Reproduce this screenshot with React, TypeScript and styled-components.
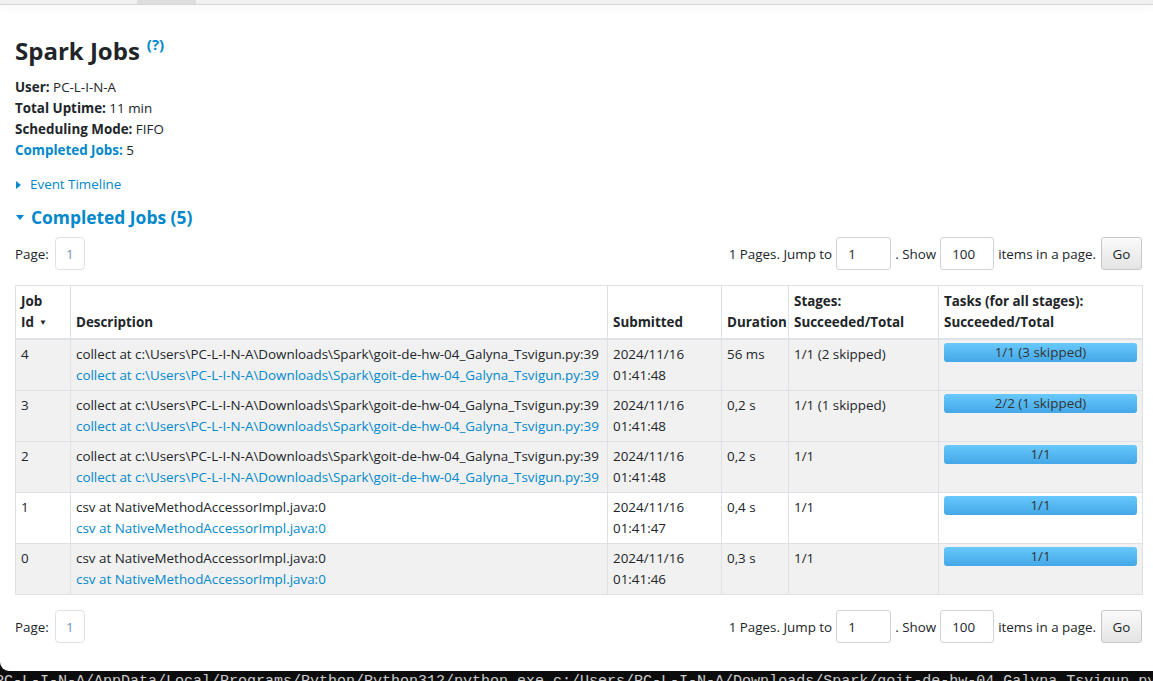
import React from "react";
import styled, { createGlobalStyle } from "styled-components";

const GlobalStyle = createGlobalStyle`
  html, body {
    margin: 0;
    padding: 0;
    background: #0c0c0c;
    overflow: hidden;
  }
  body {
    font-family: "Open Sans", "Noto Sans", sans-serif;
    font-size: 13.4px;
    color: #212529;
  }
`;

const LINK = "#0088cc";
const BORDER = "#dee2e6";

const Window = styled.div`
  background: #fff;
  height: 671px;
  border-bottom-left-radius: 9px;
  overflow: hidden;
  display: flex;
  flex-direction: column;
`;

const NavStrip = styled.div`
  height: 4px;
  background: #f0f0f0;
  border-bottom: 1px solid #d6d6d6;
  box-shadow: 0 2px 10px rgba(0, 0, 0, 0.06);
  display: flex;
`;

const NavTab = styled.div`
  margin-left: 137px;
  width: 59px;
  background: #dcdcdc;
`;

const Content = styled.div`
  padding: 0 11px 0 15px;
`;

const Title = styled.h3`
  margin: 31px 0 11px 0;
  font-size: 24px;
  line-height: 30px;
  font-weight: 700;
  color: #212529;
  display: flex;
  align-items: flex-start;
  gap: 7px;
`;

const Help = styled.sup`
  font-size: 15px;
  line-height: 16px;
  color: ${LINK};
  font-weight: 700;
  margin-top: 0;
`;

const InfoList = styled.ul`
  list-style: none;
  margin: 0;
  padding: 0;
  line-height: 21px;
`;

const InfoLabel = styled.strong<{ $link?: boolean }>`
  font-weight: 700;
  color: ${(p) => (p.$link ? LINK : "inherit")};
`;

const Toggle = styled.div<{ $big?: boolean }>`
  display: flex;
  align-items: center;
  gap: ${(p) => (p.$big ? "7px" : "8px")};
  color: ${LINK};
  font-size: ${(p) => (p.$big ? "17.4px" : "13.4px")};
  font-weight: ${(p) => (p.$big ? 700 : 400)};
  line-height: ${(p) => (p.$big ? "26px" : "21px")};
  margin-top: ${(p) => (p.$big ? "9px" : "13px")};
  padding-left: 1px;
`;

const Arrow = styled.span<{ $open?: boolean }>`
  width: 0;
  height: 0;
  ${(p) =>
    p.$open
      ? `border-left: 4px solid transparent; border-right: 4px solid transparent; border-top: 5px solid ${LINK};`
      : `border-top: 4px solid transparent; border-bottom: 4px solid transparent; border-left: 5px solid ${LINK}; margin-right: 1px;`}
`;

const Pager = styled.div<{ $top?: boolean }>`
  display: flex;
  align-items: center;
  justify-content: space-between;
  height: 33px;
  margin-top: ${(p) => (p.$top ? "7px" : "0")};
`;

const PagerSide = styled.div`
  display: flex;
  align-items: center;
  gap: 4px;
`;

const PageBox = styled.span`
  display: inline-flex;
  align-items: center;
  justify-content: center;
  width: 30px;
  height: 33px;
  box-sizing: border-box;
  border: 1px solid ${BORDER};
  border-radius: 4px;
  color: #6f94bb;
  margin-left: 2px;
`;

const NumInput = styled.input<{ $w: number }>`
  box-sizing: border-box;
  width: ${(p) => p.$w}px;
  height: 33px;
  border: 1px solid #ced4da;
  border-radius: 3px;
  padding: 0 11px;
  font: inherit;
  color: #212529;
  outline: none;
`;

const GoButton = styled.button`
  box-sizing: border-box;
  width: 41px;
  height: 33px;
  margin-left: 1px;
  border: 1px solid #c8c8c8;
  border-radius: 3px;
  background: linear-gradient(to bottom, #fafafa, #e4e4e4);
  font: inherit;
  color: #212529;
`;

const Table = styled.table`
  width: 1127px;
  border-collapse: collapse;
  margin: 15px 0;
  line-height: 21px;
  table-layout: fixed;
`;

const Th = styled.th<{ $w: number }>`
  box-sizing: border-box;
  width: ${(p) => p.$w}px;
  text-align: left;
  vertical-align: bottom;
  font-weight: 700;
  padding: 5px 5px 5px 5px;
  border: 1px solid ${BORDER};
  border-bottom: 2px solid ${BORDER};
`;

const SortLine = styled.span`
  display: block;
  white-space: nowrap;
`;

const SortMark = styled.span`
  display: inline-block;
  font-size: 8px;
  line-height: 8px;
  margin-left: 5px;
  vertical-align: 2px;
`;

const Row = styled.tr<{ $striped: boolean }>`
  background: ${(p) => (p.$striped ? "#f1f1f1" : "#fff")};
`;

const Td = styled.td`
  vertical-align: top;
  padding: 4px 5px;
  border: 1px solid ${BORDER};
  white-space: nowrap;
  overflow: hidden;
`;

const DescLink = styled.div`
  color: ${LINK};
`;

const Bar = styled.div`
  height: 19px;
  margin-top: -1px;
  border-radius: 3px;
  background: linear-gradient(to bottom, #68c9fc, #44a7e7);
  text-align: center;
  line-height: 19px;
  color: #333;
`;

const Terminal = styled.div`
  height: 10px;
  overflow: hidden;
  font-family: "Liberation Mono", "DejaVu Sans Mono", monospace;
  font-size: 15px;
  line-height: 16px;
  color: #cccccc;
  white-space: nowrap;
  margin-left: -5px;
  padding-top: 3px;
`;

type Job = {
  id: number;
  desc: string;
  submitted: [string, string];
  duration: string;
  stages: string;
  tasks: string;
};

const COLLECT =
  "collect at c:\\Users\\PC-L-I-N-A\\Downloads\\Spark\\goit-de-hw-04_Galyna_Tsvigun.py:39";
const CSV = "csv at NativeMethodAccessorImpl.java:0";

const jobs: Job[] = [
  { id: 4, desc: COLLECT, submitted: ["2024/11/16", "01:41:48"], duration: "56 ms", stages: "1/1 (2 skipped)", tasks: "1/1 (3 skipped)" },
  { id: 3, desc: COLLECT, submitted: ["2024/11/16", "01:41:48"], duration: "0,2 s", stages: "1/1 (1 skipped)", tasks: "2/2 (1 skipped)" },
  { id: 2, desc: COLLECT, submitted: ["2024/11/16", "01:41:48"], duration: "0,2 s", stages: "1/1", tasks: "1/1" },
  { id: 1, desc: CSV, submitted: ["2024/11/16", "01:41:47"], duration: "0,4 s", stages: "1/1", tasks: "1/1" },
  { id: 0, desc: CSV, submitted: ["2024/11/16", "01:41:46"], duration: "0,3 s", stages: "1/1", tasks: "1/1" },
];

const Pagination = ({ top }: { top?: boolean }) => (
  <Pager $top={top}>
    <PagerSide>
      <span>Page:</span>
      <PageBox>1</PageBox>
    </PagerSide>
    <PagerSide>
      <span>1 Pages. Jump to</span>
      <NumInput $w={55} defaultValue="1" />
      <span>. Show</span>
      <NumInput $w={54} defaultValue="100" />
      <span>items in a page.</span>
      <GoButton>Go</GoButton>
    </PagerSide>
  </Pager>
);

export default function App() {
  return (
    <>
      <GlobalStyle />
      <Window>
        <NavStrip>
          <NavTab />
        </NavStrip>
        <Content>
          <Title>
            Spark Jobs <Help>(?)</Help>
          </Title>
          <InfoList>
            <li>
              <InfoLabel>User:</InfoLabel> PC-L-I-N-A
            </li>
            <li>
              <InfoLabel>Total Uptime:</InfoLabel> 11 min
            </li>
            <li>
              <InfoLabel>Scheduling Mode:</InfoLabel> FIFO
            </li>
            <li>
              <InfoLabel $link>Completed Jobs:</InfoLabel> 5
            </li>
          </InfoList>
          <Toggle>
            <Arrow />
            Event Timeline
          </Toggle>
          <Toggle $big>
            <Arrow $open />
            Completed Jobs (5)
          </Toggle>
          <Pagination top />
          <Table>
            <thead>
              <tr>
                <Th $w={55}>
                  <SortLine>Job</SortLine>
                  <SortLine>
                    Id<SortMark>▼</SortMark>
                  </SortLine>
                </Th>
                <Th $w={537}>Description</Th>
                <Th $w={114}>Submitted</Th>
                <Th $w={67}>Duration</Th>
                <Th $w={150}>
                  Stages:
                  <br />
                  Succeeded/Total
                </Th>
                <Th $w={204}>
                  Tasks (for all stages):
                  <br />
                  Succeeded/Total
                </Th>
              </tr>
            </thead>
            <tbody>
              {jobs.map((j, i) => (
                <Row key={j.id} $striped={i % 2 === 0 || i === 1}>
                  <Td>{j.id}</Td>
                  <Td>
                    <div>{j.desc}</div>
                    <DescLink>{j.desc}</DescLink>
                  </Td>
                  <Td>
                    <div>{j.submitted[0]}</div>
                    <div>{j.submitted[1]}</div>
                  </Td>
                  <Td>{j.duration}</Td>
                  <Td>{j.stages}</Td>
                  <Td>
                    <Bar>{j.tasks}</Bar>
                  </Td>
                </Row>
              ))}
            </tbody>
          </Table>
          <Pagination />
        </Content>
      </Window>
      <Terminal>
        PC-L-I-N-A/AppData/Local/Programs/Python/Python312/python.exe c:/Users/PC-L-I-N-A/Downloads/Spark/goit-de-hw-04_Galyna_Tsvigun.py
      </Terminal>
    </>
  );
}
